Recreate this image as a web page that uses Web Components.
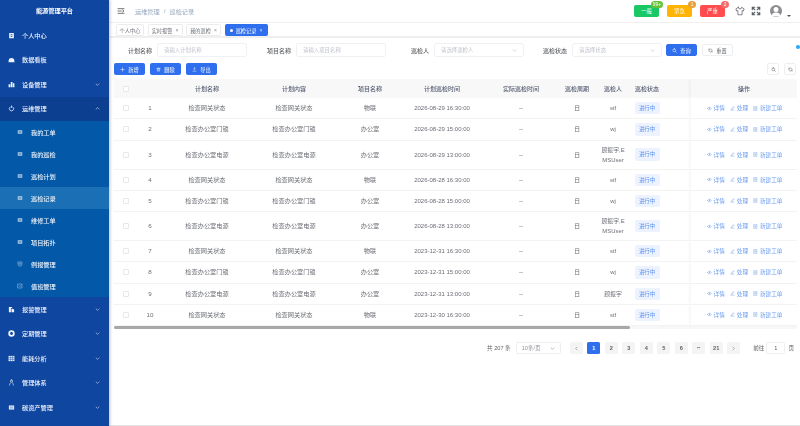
<!DOCTYPE html>
<html lang="zh">
<head>
<meta charset="utf-8">
<title>巡检记录</title>
<style>
  html, body { margin: 0; height: 426px; overflow: hidden; background: #fff; }
  body { font-family: "Liberation Sans", "Noto Sans CJK SC", sans-serif; font-size: 6px; color: #606266; }
</style>
</head>
<body>
<app-shell>
  <side-nav slot="nav"></side-nav>
  <top-bar></top-bar>
  <tag-tabs></tag-tabs>
  <filter-bar></filter-bar>
  <tool-bar></tool-bar>
  <data-table></data-table>
  <page-nav></page-nav>
</app-shell>

<script>
const svg = (body, size = 7, extra = "") =>
  `<svg width="${size}" height="${size}" viewBox="0 0 24 24" style="display:block;flex:none;${extra}">${body}</svg>`;
const line = (d, w = 2) => `<path d="${d}" fill="none" stroke="currentColor" stroke-width="${w}" stroke-linecap="round" stroke-linejoin="round"/>`;
const solid = (d) => `<path d="${d}" fill="currentColor"/>`;

const ICONS = {
  plus: line("M12 4v16M4 12h16", 2.4),
  trash: line("M4 7h16M9 7V4h6v3M6 7l1 13h10l1-13M10 11v5M14 11v5"),
  upload: line("M12 15V4M8 8l4-4 4 4M4 20h16"),
  search: line("M11 4a7 7 0 1 0 0 14 7 7 0 0 0 0-14zM16.5 16.5 21 21", 2.4),
  refresh: line("M20 11a8 8 0 0 0-14-4L4 9M4 4v5h5M4 13a8 8 0 0 0 14 4l2-2M20 20v-5h-5"),
  chevDown: line("M5 9l7 7 7-7", 3),
  chevUp: line("M5 15l7-7 7 7", 3),
  chevLeft: line("M15 5l-7 7 7 7", 2.6),
  chevRight: line("M9 5l7 7-7 7", 2.6),
  eye: line("M2 12s4-6.5 10-6.5S22 12 22 12s-4 6.5-10 6.5S2 12 2 12zM12 9.5a2.5 2.5 0 1 0 0 5 2.5 2.5 0 0 0 0-5z"),
  edit: line("M4 20h16M7 16l1-4 9-9 3 3-9 9z"),
  doc: line("M5 3h14v18H5zM9 8h6M9 12h6M9 16h3"),
  person: solid("M4 3h16v18H4z M9 8v2h6V8z M9 13v3h6v-3z"),
  board: solid("M2 17a10 10 0 0 1 20 0v4H2z"),
  bars: solid("M2 11h6v10H2zM9.5 3h6v18h-6zM17 8h5v13h-5z"),
  ops: line("M12 3v6M7 7a7.5 7.5 0 1 0 10 0", 2.6),
  sub: solid("M3 5h18v14H3z") + `<path d="M6 10h12M6 14h12" stroke="#0358a8" stroke-width="1.5"/>`,
  shield: line("M4 4h16v9a8 8 0 0 1-16 0zM12 8v8M8 11h8"),
  check: line("M4 4h16v16H4zM8 12l3 3 5-6"),
  alarm: solid("M3 3h11v4h-4v14H3zM12 9h5l4 4v8h-9z"),
  timer: `<path d="M12 4a8 8 0 1 0 0 16 8 8 0 0 0 0-16z" fill="none" stroke="currentColor" stroke-width="6"/>`,
  grid: solid("M2 3h20v18H2z") + `<path d="M2 9h20M2 15h20M9 3v18M16 3v18" stroke="#0f469f" stroke-width="1.6"/>`,
  people: line("M12 3a4 4 0 1 0 0 8 4 4 0 0 0 0-8zM5 21l3-8M19 21l-3-8"),
  carbon: solid("M3 5h18v14H3z") + `<path d="M6 10h12M6 14h12" stroke="#0f469f" stroke-width="1.5"/>`,
  shirt: line("M8 3 2 7l2 5 3-1v10h10V11l3 1 2-5-6-4a4 4 0 0 1-8 0z", 1.8),
  expand: line("M3 9V3h6M3 3l6 6M21 9V3h-6M21 3l-6 6M3 15v6h6M3 21l6-6M21 15v6h-6M21 21l-6-6", 2.6),
  menu: line("M3 5h18M3 12h10M3 19h18M17 9l4 3-4 3", 2.4),
};

class AppShell extends HTMLElement {
  constructor() {
    super();
    this.attachShadow({ mode: "open" });
    this.shadowRoot.innerHTML = `
      <style>
        :host { display: flex; height: 426px; position: relative; filter: blur(0.3px); }
        main {
          flex: 1; min-width: 0; display: flex; flex-direction: column; box-sizing: border-box;
          border-bottom: 1px solid #e2e2e2; padding-left: 1px;
        }
        .dot { position: absolute; left: 796px; top: 45px; width: 4px; height: 4px; border-radius: 50%; background: #2aa7f5; }
      </style>
      <slot name="nav"></slot>
      <main><slot></slot></main>
      <span class="dot"></span>
    `;
  }
}

const NAV = [
  { t: "个人中心", i: "person" },
  { t: "数据看板", i: "board" },
  { t: "设备管理", i: "bars", arrow: "chevDown" },
  { t: "运维管理", i: "ops", arrow: "chevUp", open: true },
  { t: "我的工单", i: "sub", sub: true },
  { t: "我的巡检", i: "sub", sub: true },
  { t: "巡检计划", i: "sub", sub: true },
  { t: "巡检记录", i: "sub", sub: true, active: true },
  { t: "维修工单", i: "sub", sub: true },
  { t: "项目拓扑", i: "sub", sub: true },
  { t: "例报管理", i: "shield", sub: true },
  { t: "值班管理", i: "check", sub: true },
  { t: "报警管理", i: "alarm", arrow: "chevDown" },
  { t: "定期管理", i: "timer", arrow: "chevDown" },
  { t: "能耗分析", i: "grid", arrow: "chevDown" },
  { t: "管理体系", i: "people", arrow: "chevDown" },
  { t: "碳资产管理", i: "carbon", arrow: "chevDown" },
];

class SideNav extends HTMLElement {
  constructor() {
    super();
    this.attachShadow({ mode: "open" });
  }

  connectedCallback() {
    this.shadowRoot.innerHTML = `
      <style>
        :host {
          display: block; width: 109px; flex: none; height: 426px; background: #0f469f; color: #eef3fb;
          font-size: 6.2px; font-weight: 500; box-shadow: 1px 0 3px rgba(0,0,0,.25); z-index: 2; position: relative;
        }
        h1 { margin: 0; height: 23px; line-height: 22px; text-align: center; font-size: 6.2px; font-weight: 700; color: #fff; }
        .item { display: flex; align-items: center; height: 24.5px; padding-left: 8px; gap: 7px; }
        .item.open { background: #0c3f90; }
        .item.sub { height: 22px; padding-left: 17px; gap: 8px; background: #0358a8; }
        .item.sub.active { background: #1a6fb5; }
        .item.sub svg { opacity: .75; }
        span { flex: 1; }
        .arrow { margin-right: 9px; opacity: .85; }
      </style>
      <h1>能源管理平台</h1>
      ${NAV.map((n) => `
        <div class="item ${n.sub ? "sub" : ""} ${n.open ? "open" : ""} ${n.active ? "active" : ""}">
          ${svg(ICONS[n.i], n.sub ? 6 : 7)}
          <span>${n.t}</span>
          ${n.arrow ? `<i class="arrow">${svg(ICONS[n.arrow], 5)}</i>` : ""}
        </div>`).join("")}
    `;
  }
}

class AlertChip extends HTMLElement {
  constructor() {
    super();
    this.attachShadow({ mode: "open" });
  }

  connectedCallback() {
    const bg = this.getAttribute("bg");
    const dot = this.getAttribute("dot");
    this.shadowRoot.innerHTML = `
      <style>
        :host {
          display: block; position: relative; width: 25px; height: 12px; border-radius: 2px; background: ${bg};
          color: #fff; font-size: 5.4px; line-height: 12px; text-align: center;
        }
        b {
          position: absolute; right: -4px; top: -4px; min-width: 4px; height: 7px; line-height: 7px; padding: 0 2px;
          border-radius: 4px; background: ${dot}; font-weight: 400; font-size: 4.8px; white-space: nowrap;
        }
      </style>
      <slot></slot><b>${this.getAttribute("count")}</b>
    `;
  }
}

class TopBar extends HTMLElement {
  constructor() {
    super();
    this.attachShadow({ mode: "open" });
    this.shadowRoot.innerHTML = `
      <style>
        :host { display: flex; align-items: center; height: 22px; padding: 0 7px 0 7px; font-size: 6.2px; color: #97a8be; box-sizing: border-box; }
        .menu { color: #555; margin-right: 10px; }
        .crumb { flex: 1; display: flex; gap: 4px; }
        .chips { display: flex; align-items: center; gap: 8px; margin-right: 8px; }
        .tool { color: #5a5e66; }
        .avatar { width: 12px; height: 12px; border-radius: 50%; background: #8d8d91; margin: 0 5px 0 9px; overflow: hidden; }
        .caret { width: 0; height: 0; border: 2px solid transparent; border-top-color: #555; border-bottom: 0; margin-top: 9px; margin-right: 2px; }
      </style>
      <span class="menu">${svg(ICONS.menu, 8)}</span>
      <div class="crumb"><span>运维管理</span><span>/</span><span>巡检记录</span></div>
      <div class="chips">
        <alert-chip bg="#19c765" dot="#67c23a" count="99+">一般</alert-chip>
        <alert-chip bg="#ffb302" dot="#e6a23c" count="1">紧急</alert-chip>
        <alert-chip bg="#ff4d4f" dot="#f56c6c" count="2">严重</alert-chip>
      </div>
      <span class="tool" style="margin-left:2px">${svg(ICONS.shirt, 10)}</span>
      <span class="tool" style="margin-left:6px">${svg(ICONS.expand, 10)}</span>
      <span class="avatar"><svg width="12" height="12" viewBox="0 0 24 24" style="display:block"><circle cx="12" cy="9" r="5" fill="#fff"/><path d="M3 23c1-7 5-8 9-8s8 1 9 8z" fill="#fff"/></svg></span>
      <span class="caret"></span>
    `;
  }
}

class TagTabs extends HTMLElement {
  constructor() {
    super();
    this.attachShadow({ mode: "open" });
    const tabs = [["个人中心", 28, false], ["实时报警", 35, true], ["我的巡检", 35, true], ["巡检记录", 43, true, true]];
    this.shadowRoot.innerHTML = `
      <style>
        :host {
          display: flex; gap: 3.5px; height: 16px; padding: 1px 0 0 6px; box-sizing: border-box; font-size: 5.2px;
          border-top: 1px solid #f0f0f0; border-bottom: 2px solid #efefef; color: #6b6f76;
        }
        .tab {
          box-sizing: border-box; height: 12px; border: 1px solid #ececec; display: flex; align-items: center;
          justify-content: center; gap: 3px; background: #fff; border-radius: 1.5px;
        }
        .on { background: #2f6fed; border-color: #2f6fed; color: #fff; }
        .on::before { content: ""; width: 3px; height: 3px; border-radius: 50%; background: #fff; }
        i { font-style: normal; font-size: 5px; color: inherit; opacity: .8; }
      </style>
      ${tabs.map(([t, w, x, on]) => `<div class="tab ${on ? "on" : ""}" style="width:${w}px">${t}${x ? "<i>×</i>" : ""}</div>`).join("")}
    `;
  }
}

class FilterField extends HTMLElement {
  constructor() {
    super();
    this.attachShadow({ mode: "open" });
  }

  connectedCallback() {
    const select = this.hasAttribute("select");
    this.shadowRoot.innerHTML = `
      <style>
        :host { display: flex; align-items: center; gap: 5px; font-size: 6px; font-weight: 500; color: #606266; }
        .box {
          box-sizing: border-box; width: 90px; height: 14px; border: 1px solid #f0f1f4; border-radius: 2px; display: flex;
          align-items: center; justify-content: space-between; padding: 0 6px; font-size: 5.4px; font-weight: 400; color: #c0c4cc;
        }
      </style>
      <span><slot></slot></span>
      <div class="box"><span>${this.getAttribute("placeholder")}</span>${select ? svg(ICONS.chevDown, 5) : ""}</div>
    `;
  }
}

class FilterBar extends HTMLElement {
  constructor() {
    super();
    this.attachShadow({ mode: "open" });
    this.shadowRoot.innerHTML = `
      <style>
        :host { display: flex; align-items: center; height: 21px; padding-left: 18px; padding-top: 3px; box-sizing: border-box; }
        button {
          display: flex; align-items: center; justify-content: center; gap: 3px; box-sizing: border-box; width: 31px; height: 12px;
          padding: 0; border-radius: 2px; font: inherit; font-size: 5.2px; border: 1px solid #eceef1; background: #fff; color: #606266;
        }
        .primary { background: #2f6fed; border-color: #2f6fed; color: #fff; margin: 0 5px 0 4px; }
      </style>
      <filter-field placeholder="请输入计划名称" style="margin-right:20px">计划名称</filter-field>
      <filter-field placeholder="请输入项目名称" style="margin-right:25px">项目名称</filter-field>
      <filter-field placeholder="请选择巡检人" select style="margin-right:19px">巡检人</filter-field>
      <filter-field placeholder="请选择状态" select>巡检状态</filter-field>
      <button class="primary">${svg(ICONS.search, 5)}查询</button>
      <button>${svg(ICONS.refresh, 5)}重置</button>
    `;
  }
}

class ToolBar extends HTMLElement {
  constructor() {
    super();
    this.attachShadow({ mode: "open" });
    const btn = (i, t) => `<button>${svg(ICONS[i], 5)}${t}</button>`;
    this.shadowRoot.innerHTML = `
      <style>
        :host { display: flex; align-items: center; height: 20px; padding: 4px 4px 4px 4px; box-sizing: border-box; gap: 5px; }
        button {
          display: flex; align-items: center; justify-content: center; gap: 3px; width: 31px; height: 12px; box-sizing: border-box;
          padding: 0; border: 0; border-radius: 2px; background: #2f6fed; color: #fff; font: inherit; font-size: 5.2px;
        }
        .gap { flex: 1; }
        .round { width: 12px; background: #fff; border: 1px solid #eceef1; color: #606266; }
      </style>
      ${btn("plus", "新增")}${btn("trash", "删除")}${btn("upload", "导出")}
      <span class="gap"></span>
      <button class="round">${svg(ICONS.search, 5)}</button>
      <button class="round">${svg(ICONS.refresh, 5)}</button>
    `;
  }
}

const HEAD = ["", "", "计划名称", "计划内容", "项目名称", "计划巡检时间", "实际巡检时间", "巡检周期", "巡检人", "巡检状态", "", "操作"];
const KIND = {
  gate: ["检查网关状态", "物联"],
  door: ["检查办公室门锁", "办公室"],
  power: ["检查办公室电源", "办公室"],
};
const ROWS = [
  ["gate", "2026-08-29 16:30:00", "stf"],
  ["door", "2026-08-29 15:00:00", "wj"],
  ["power", "2026-08-29 13:00:00", "顾振宇,EMSUser"],
  ["gate", "2026-08-28 16:30:00", "stf"],
  ["door", "2026-08-28 15:00:00", "wj"],
  ["power", "2026-08-28 13:00:00", "顾振宇,EMSUser"],
  ["gate", "2023-12-31 16:30:00", "stf"],
  ["door", "2023-12-31 15:00:00", "wj"],
  ["power", "2023-12-31 13:00:00", "顾振宇"],
  ["gate", "2023-12-30 16:30:00", "stf"],
];

class DataTable extends HTMLElement {
  constructor() {
    super();
    this.attachShadow({ mode: "open" });
  }

  connectedCallback() {
    const action = (i, t) => `<a>${svg(ICONS[i], 5)}${t}</a>`;
    const rows = ROWS.map(([k, time, who], idx) => {
      const [name, project] = KIND[k];
      return `
        <div class="row">
          <div><em></em></div>
          <div>${idx + 1}</div>
          <div>${name}</div>
          <div>${name}</div>
          <div>${project}</div>
          <div class="time">${time}</div>
          <div>--</div>
          <div>日</div>
          <div class="who">${who}</div>
          <div><u>进行中</u></div>
          <div></div>
          <div class="ops">${action("eye", "详情")}${action("edit", "处理")}${action("doc", "新建工单")}</div>
        </div>`;
    }).join("");
    this.shadowRoot.innerHTML = `
      <style>
        :host { display: block; margin: 0 3px 0 4px; font-size: 6.2px; color: #6b6e75; }
        .row, .head {
          display: grid; grid-template-columns: 23px 26px 88px 86px 66px 78px 80px 32px 40px 28px 30px 106px;
          align-items: stretch; text-align: center; border-bottom: 1px solid #f3f3f3; box-sizing: border-box;
        }
        .row > div, .head > div { display: flex; align-items: center; justify-content: center; padding: 4px 0; line-height: 10px; min-height: 12.25px; }
        .head { background: #f8f8f9; color: #515a6e; font-weight: 500; font-size: 6px; height: 19px; border: 0; }
        .head > div { padding: 0; white-space: nowrap; }
        .time { font-size: 6px; }
        .who { word-break: break-all; padding: 4px 7px !important; font-size: 5.9px; }
        em { display: block; box-sizing: border-box; width: 6px; height: 6px; border: 1px solid #e7e8ea; border-radius: 1px; background: #fff; }
        u {
          display: block; width: 25px; height: 12.25px; line-height: 12.25px; text-decoration: none; border-radius: 2px;
          background: #ecf2fe; color: #5b8ff0; font-size: 5.4px; flex: none;
        }
        .head > div:last-child, .row > div:last-child { background: inherit; box-shadow: -2px 0 3px rgba(0,0,0,.04); clip-path: inset(0 0 0 -6px); }
        .row { background: #fff; }
        .ops { gap: 5px; color: #6c9cf0; font-size: 5.6px; padding-left: 1px !important; }
        a { display: flex; align-items: center; gap: 2px; white-space: nowrap; }
        .track { height: 3px; background: #f7f7f7; }
        .bar { height: 3px; width: 516px; background: #a8a8a8; border-radius: 2px; }
      </style>
      <div class="head">${HEAD.map((h, i) => `<div>${i === 0 ? "<em></em>" : h}</div>`).join("")}</div>
      ${rows}
      <div class="track"><div class="bar"></div></div>
    `;
  }
}

class PageNav extends HTMLElement {
  constructor() {
    super();
    this.attachShadow({ mode: "open" });
    const pages = ["1", "2", "3", "4", "5", "6", "•••", "21"];
    this.shadowRoot.innerHTML = `
      <style>
        :host {
          display: flex; align-items: center; justify-content: flex-end; height: 12px; margin-top: 13px; padding-right: 6px;
          font-size: 5.6px; color: #606266; white-space: nowrap;
        }
        .size {
          box-sizing: border-box; width: 45px; height: 12px; border: 1px solid #eee; border-radius: 2px; display: flex; align-items: center;
          justify-content: space-between; padding: 0 5px; margin: 0 9px 0 5px; color: #909399;
        }
        .list { display: flex; gap: 4.5px; margin-right: 13px; }
        .p { width: 13px; height: 12px; line-height: 12px; background: #f4f4f5; border-radius: 1.5px; text-align: center; font-weight: 700; display: flex; align-items: center; justify-content: center; }
        .more { font-size: 3px; color: #555; }
        .on { background: #2f6fed; color: #fff; }
        .nav { color: #777; font-weight: 400; }
        .go { box-sizing: border-box; width: 19px; height: 12px; line-height: 10px; border: 1px solid #eee; border-radius: 2px; text-align: center; margin: 0 3px 0 2px; }
      </style>
      <span>共 207 条</span>
      <div class="size"><span>10条/页</span>${svg(ICONS.chevDown, 5)}</div>
      <div class="list">
        <div class="p nav">${svg(ICONS.chevLeft, 5)}</div>
        ${pages.map((p, i) => `<div class="p ${i === 0 ? "on" : ""} ${i === 6 ? "more" : ""}">${p}</div>`).join("")}
        <div class="p nav">${svg(ICONS.chevRight, 5)}</div>
      </div>
      <span>前往</span><div class="go">1</div><span>页</span>
    `;
  }
}

customElements.define("app-shell", AppShell);
customElements.define("side-nav", SideNav);
customElements.define("alert-chip", AlertChip);
customElements.define("top-bar", TopBar);
customElements.define("tag-tabs", TagTabs);
customElements.define("filter-field", FilterField);
customElements.define("filter-bar", FilterBar);
customElements.define("tool-bar", ToolBar);
customElements.define("data-table", DataTable);
customElements.define("page-nav", PageNav);
</script>
</body>
</html>
